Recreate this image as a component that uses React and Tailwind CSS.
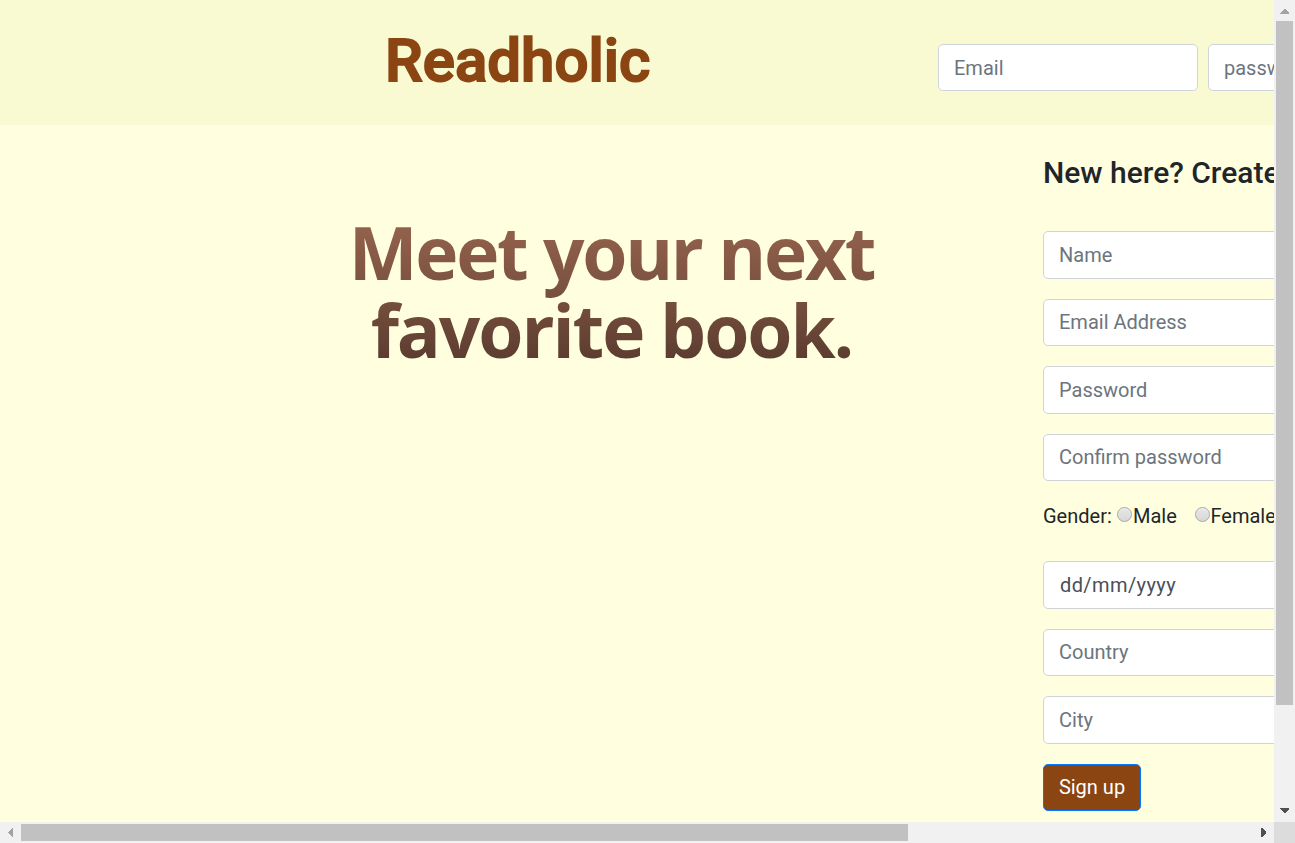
const control =
  'block h-[47.5px] rounded-[5px] border border-[#ced4da] bg-white px-[15px] text-[20px] leading-[30px] text-[#495057] placeholder:text-[#6c757d] placeholder:opacity-100 outline-none';

function Field({ placeholder, type = 'text' }) {
  return <input type={type} placeholder={placeholder} className={`${control} w-[380px] shrink-0`} />;
}

function Radio() {
  return (
    <span className="mt-[6px] block size-[15px] shrink-0 rounded-full border border-[#a6a6a6] bg-linear-to-b from-[#e6e6e6] to-[#d8d8d8] shadow-[inset_0_1px_1px_#f4f4f4]" />
  );
}

function Header() {
  return (
    <header className="flex h-[125px] shrink-0 bg-[#fafad2]">
      <h1 className="ml-[385px] mt-[23px] w-[553px] shrink-0 text-[60px] leading-[75px] font-medium text-[#8b4513] [-webkit-text-stroke:1.9px_#8b4513]">
        Readholic
      </h1>
      <form className="mt-[43.5px] flex shrink-0 gap-[10px]">
        <input type="text" placeholder="Email" className={`${control} w-[260px] shrink-0 pt-[2px]`} />
        <input type="text" placeholder="password" className={`${control} w-[260px] shrink-0 pt-[2px]`} />
      </form>
    </header>
  );
}

function Hero() {
  return (
    <section className="flex w-[1043px] shrink-0 items-start pt-[88px]">
      <div className="ml-[330px] w-[563px] bg-linear-to-b from-[#98654f] from-0% via-[#7a5140] via-50% to-[#583a2e] to-100% bg-clip-text text-center font-['Open_Sans',sans-serif] text-[73px] leading-[78px] font-bold whitespace-nowrap text-transparent">
        <p className="tracking-[-2.3px]">Meet your next</p>
        <p className="tracking-[-2.1px]">favorite book.</p>
      </div>
    </section>
  );
}

function SignUp() {
  return (
    <form className="flex w-[380px] shrink-0 flex-col pt-[30px]">
      <h2 className="text-[30px] leading-[36px] font-medium whitespace-nowrap text-[#212529]">
        New here? Create an account
      </h2>
      <div className="mt-[40px] flex flex-col gap-[20px]">
        <Field placeholder="Name" />
        <Field placeholder="Email Address" />
        <Field placeholder="Password" />
        <Field placeholder="Confirm password" />
      </div>
      <div className="mt-[20px] flex h-[30px] text-[20px] leading-[30px] text-[#212529]">
        <span className="w-[74px]">Gender:</span>
        <label className="flex w-[78px] gap-[1px]">
          <Radio />
          Male
        </label>
        <label className="flex gap-[0.5px]">
          <Radio />
          Female
        </label>
      </div>
      <div className="mt-[30px] flex flex-col gap-[20px]">
        <input
          type="text"
          placeholder="dd/mm/yyyy"
          className="block h-[47.5px] w-[380px] rounded-[5px] border border-[#ced4da] bg-white px-[16px] text-[20px] leading-[30px] tracking-[0.4px] text-[#495057] outline-none placeholder:text-[#495057] placeholder:opacity-100"
        />
        <Field placeholder="Country" />
        <Field placeholder="City" />
        <button
          type="button"
          className="h-[47.5px] w-[98px] rounded-[5px] border border-[#007bff] bg-[#8b4513] text-[20px] leading-[30px] text-white"
        >
          Sign up
        </button>
      </div>
    </form>
  );
}

function Arrow({ d, fill }) {
  return (
    <svg viewBox="0 0 21 21" className="size-[21px] shrink-0" shapeRendering="crispEdges">
      <path d={d} fill={fill} />
    </svg>
  );
}

export default function App() {
  return (
    <div className="grid h-[843px] w-[1295px] grid-cols-[1274px_21px] grid-rows-[822px_21px] overflow-hidden font-[Roboto,sans-serif]">
      <div className="flex flex-col overflow-hidden bg-[#ffffe0]">
        <Header />
        <main className="flex">
          <Hero />
          <SignUp />
        </main>
      </div>
      <div className="flex flex-col justify-between bg-[#f1f1f1]">
        <div>
          <Arrow d="M6 14V13L10 9H11L15 13V14Z" fill="#a3a3a3" />
          <div className="ml-[2px] h-[684px] w-[17px] bg-[#c1c1c1]" />
        </div>
        <Arrow d="M6 7H15V8L11 12H10L6 8Z" fill="#505050" />
      </div>
      <div className="flex justify-between bg-[#f1f1f1]">
        <div className="flex">
          <Arrow d="M13 6V15H12L8 11V10L12 6Z" fill="#a3a3a3" />
          <div className="mt-[2px] h-[17px] w-[887px] bg-[#c1c1c1]" />
        </div>
        <Arrow d="M8 6H9L13 10V11L9 15H8Z" fill="#505050" />
      </div>
      <div className="bg-[#dcdcdc]" />
    </div>
  );
}
